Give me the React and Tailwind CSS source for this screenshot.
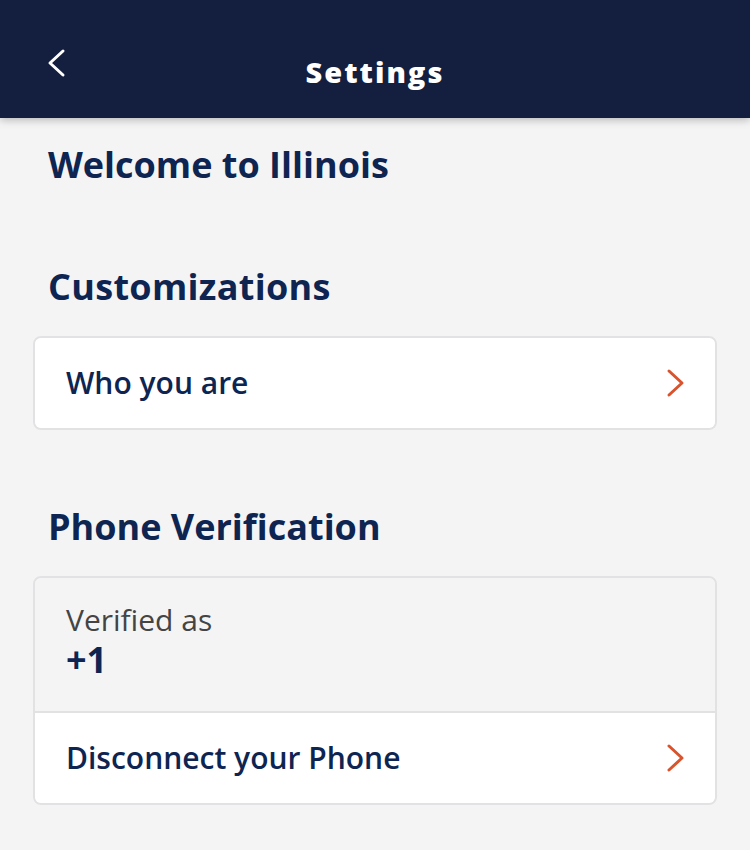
const Chevron = ({ dir = 'right', className }) => (
  <svg viewBox="0 0 20 30" className={className} fill="none" stroke="currentColor" strokeWidth="3" strokeLinecap="round" strokeLinejoin="round">
    {dir === 'right' ? <polyline points="4,3 17,15 4,27" /> : <polyline points="16,3 3,15 16,27" />}
  </svg>
);

const Row = ({ label }) => (
  <div className="flex items-center justify-between h-[90px] pl-[31px] pr-[30px] bg-white">
    <span className="text-[30px] leading-[36px] font-semibold text-[#0e2552]">{label}</span>
    <Chevron className="h-[30px] w-[20px] text-[#d9532c]" />
  </div>
);

const App = () => {
  return (
    <div className="min-h-[850px] bg-[#f4f4f4] font-['Open_Sans',sans-serif]">
      {/* Header */}
      <div className="relative h-[118px] bg-[#141f3f] shadow-[0_2px_8px_rgba(0,0,0,0.25)] pt-[54px]">
        <button className="absolute left-[47px] top-[48px] text-white">
          <Chevron dir="left" className="h-[30px] w-[20px]" />
        </button>
        <h1 className="text-center text-[29px] leading-[36px] font-extrabold text-white tracking-[2px]">Settings</h1>
      </div>

      <div className="px-[33px] pt-[27px]">
        <h2 className="pl-[15px] text-[36px] leading-[40px] font-bold text-[#0e2552]">Welcome to Illinois</h2>

        <h2 className="mt-[82px] pl-[15px] text-[36px] leading-[40px] font-bold text-[#0e2552] tracking-[0.3px]">Customizations</h2>
        <div className="mt-[29px] rounded-lg border-2 border-[#e2e2e4] overflow-hidden">
          <Row label="Who you are" />
        </div>

        <h2 className="mt-[77px] pl-[15px] text-[36px] leading-[40px] font-bold text-[#0e2552]">Phone Verification</h2>
        <div className="mt-[29px] rounded-lg border-2 border-[#e2e2e4] overflow-hidden">
          <div className="bg-[#f4f4f4] h-[133px] pl-[31px] pt-[24px]">
            <div className="text-[30px] leading-[36px] text-[#444]">Verified as</div>
            <div className="mt-[2px] text-[36px] leading-[40px] font-bold text-[#0e2552]">+1</div>
          </div>
          <div className="h-[2px] bg-[#e2e2e4]" />
          <Row label="Disconnect your Phone" />
        </div>
      </div>
    </div>
  );
};

export default App;
